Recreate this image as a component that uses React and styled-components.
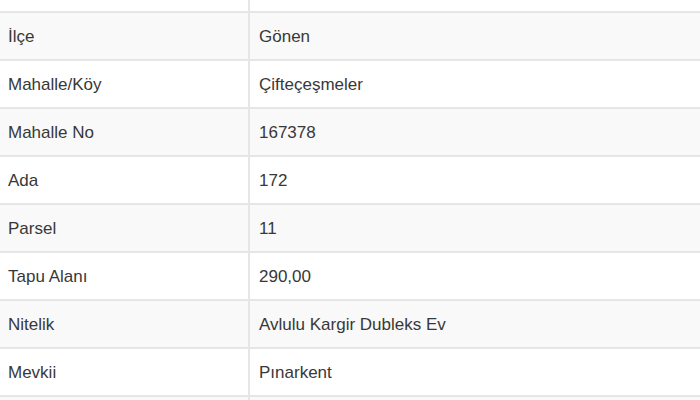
import React from 'react';
import styled, {createGlobalStyle} from 'styled-components';

const GlobalStyle = createGlobalStyle`
    html, body {
        margin: 0;
        padding: 0;
        background: #fff;
        overflow: hidden;
    }
`

const rows = [
    ['İlçe', 'Gönen'],
    ['Mahalle/Köy', 'Çifteçeşmeler'],
    ['Mahalle No', '167378'],
    ['Ada', '172'],
    ['Parsel', '11'],
    ['Tapu Alanı', '290,00'],
    ['Nitelik', 'Avlulu Kargir Dubleks Ev'],
    ['Mevkii', 'Pınarkent'],
]

const App = () => {
    return(
        <Wrapper>
            <GlobalStyle/>
            <Table>
                <tbody>
                    {/* tail of the row above, scrolled mostly out of view */}
                    <Row $height={13}>
                        <Label/>
                        <Value/>
                    </Row>
                    {rows.map(([label, value], i) => (
                        <Row key={label} $striped={i % 2 === 0}>
                            <Label>{label}</Label>
                            <Value>{value}</Value>
                        </Row>
                    ))}
                    <Row $striped>
                        <Label/>
                        <Value/>
                    </Row>
                </tbody>
            </Table>
        </Wrapper>
    )
}

const Wrapper = styled.div`
    width: 700px;
    height: 400px;
    overflow: hidden;
`

const Table = styled.table`
    width: 100%;
    border-collapse: separate;
    border-spacing: 0;
    font-family: "Liberation Sans", Arial, sans-serif;
    font-size: 17px;
    color: #383838;
`

const Row = styled.tr`
    background: ${props => props.$striped ? '#f9f9f9' : '#fff'};

    td {
        height: ${props => props.$height || 48}px;
        box-sizing: border-box;
        border-bottom: 2px solid #e6e6e6;
        vertical-align: middle;
        line-height: 20px;
        padding-top: ${props => props.$height ? 0 : 2}px;
        padding-bottom: 0;
    }
`

const Label = styled.td`
    width: 250px;
    padding-left: 8px;
    border-right: 2px solid #e6e6e6;
`

const Value = styled.td`
    padding-left: 9px;
`

export default App
